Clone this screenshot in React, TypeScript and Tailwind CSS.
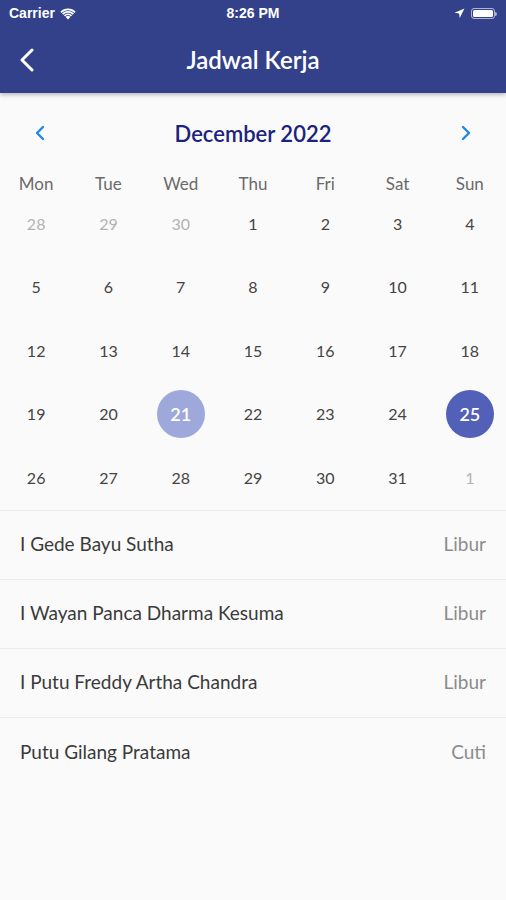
import type { ReactNode } from "react";

const days: { d: number; muted?: boolean; mark?: "light" | "dark" }[][] = [
  [{ d: 28, muted: true }, { d: 29, muted: true }, { d: 30, muted: true }, { d: 1 }, { d: 2 }, { d: 3 }, { d: 4 }],
  [{ d: 5 }, { d: 6 }, { d: 7 }, { d: 8 }, { d: 9 }, { d: 10 }, { d: 11 }],
  [{ d: 12 }, { d: 13 }, { d: 14 }, { d: 15 }, { d: 16 }, { d: 17 }, { d: 18 }],
  [{ d: 19 }, { d: 20 }, { d: 21, mark: "light" }, { d: 22 }, { d: 23 }, { d: 24 }, { d: 25, mark: "dark" }],
  [{ d: 26 }, { d: 27 }, { d: 28 }, { d: 29 }, { d: 30 }, { d: 31 }, { d: 1, muted: true }],
];

const weekdays = ["Mon", "Tue", "Wed", "Thu", "Fri", "Sat", "Sun"];

const staff = [
  { name: "I Gede Bayu Sutha", status: "Libur" },
  { name: "I Wayan Panca Dharma Kesuma", status: "Libur" },
  { name: "I Putu Freddy Artha Chandra", status: "Libur" },
  { name: "Putu Gilang Pratama", status: "Cuti" },
];

function StatusBar() {
  return (
    <div className="flex h-[27px] items-center justify-between px-[9px] text-[14px] font-semibold text-white [font-family:'Liberation_Sans',Arial,sans-serif]">
      <div className="flex w-[100px] items-center gap-[5px]">
        <span>Carrier</span>
        <svg width="16" height="12" viewBox="0 0 16 12" fill="white">
          <path d="M8 11.5 5.6 9a3.4 3.4 0 0 1 4.8 0Z" />
          <path d="M3.9 7.3a5.8 5.8 0 0 1 8.2 0l-1.2 1.2a4.1 4.1 0 0 0-5.8 0Z" />
          <path d="M2.1 5.5a8.4 8.4 0 0 1 11.8 0l-1.2 1.2a6.7 6.7 0 0 0-9.4 0Z" />
          <path d="M.3 3.7a11 11 0 0 1 15.4 0l-1.2 1.2a9.3 9.3 0 0 0-13 0Z" />
        </svg>
      </div>
      <span>8:26 PM</span>
      <div className="flex w-[100px] items-center justify-end gap-[6px]">
        <svg width="11" height="11" viewBox="0 0 11 11" fill="white">
          <path d="M10.5.5 .5 4.8l4.6.6.6 4.6Z" />
        </svg>
        <div className="flex items-center">
          <div className="h-[11px] w-[24px] rounded-[3px] border border-white/60 p-[1px]">
            <div className="h-full w-full rounded-[1.5px] bg-white" />
          </div>
          <div className="h-[4px] w-[1.5px] rounded-r bg-white/60" />
        </div>
      </div>
    </div>
  );
}

function Cell({ children }: { children: ReactNode }) {
  return <div className="flex items-center justify-center">{children}</div>;
}

export default function App() {
  return (
    <div className="min-h-[900px] bg-[#fafafa] [font-family:Lato,'Noto_Sans',sans-serif]">
      <div className="relative z-10 bg-[#33418a] shadow-[0_2px_4px_rgba(0,0,0,0.25)]">
        <StatusBar />
        <div className="relative flex h-[66px] items-center justify-center">
          <svg className="absolute left-[19px] top-[21px]" width="16" height="24" viewBox="0 0 16 24" fill="none">
            <path d="M13 2 3 12l10 10" stroke="white" strokeWidth="3" strokeLinecap="round" strokeLinejoin="round" />
          </svg>
          <h1 className="text-[24px] font-semibold text-white">Jadwal Kerja</h1>
        </div>
      </div>

      <div className="border-b border-[#ececec] pt-[18px]">
        <div className="flex h-[44px] items-center justify-between px-[34px]">
          <svg width="12" height="16" viewBox="0 0 12 16" fill="none">
            <path d="M9 2 3 8l6 6" stroke="#1e88e5" strokeWidth="2.4" strokeLinecap="round" strokeLinejoin="round" />
          </svg>
          <span className="text-[22px] font-semibold text-[#1a237e]">December 2022</span>
          <svg width="12" height="16" viewBox="0 0 12 16" fill="none">
            <path d="M3 2l6 6-6 6" stroke="#1e88e5" strokeWidth="2.4" strokeLinecap="round" strokeLinejoin="round" />
          </svg>
        </div>
        <div className="mt-[16px] grid h-[21px] grid-cols-7 text-[17px] text-[#6a6a6a]">
          {weekdays.map((w) => (
            <Cell key={w}>{w}</Cell>
          ))}
        </div>
        <div className="grid grid-cols-7">
          {days.flat().map((c, i) => (
            <div key={i} className="flex h-[63.5px] items-center justify-center">
              {c.mark ? (
                <div
                  className={
                    c.mark === "light"
                      ? "flex h-[48px] w-[48px] items-center justify-center rounded-full bg-[#9fa8da] text-[18px] font-semibold text-white"
                      : "flex h-[48px] w-[48px] items-center justify-center rounded-full bg-[#5260b8] text-[18px] font-semibold text-white"
                  }
                >
                  {c.d}
                </div>
              ) : (
                <span className={c.muted ? "text-[16px] text-[#b3b3b3]" : "text-[16px] text-[#444]"}>{c.d}</span>
              )}
            </div>
          ))}
        </div>
      </div>

      <div>
        {staff.map((s, i) => (
          <div
            key={s.name}
            className={
              i < staff.length - 1
                ? "flex h-[69px] items-center justify-between border-b border-[#ececec] px-[20px] text-[19px]"
                : "flex h-[69px] items-center justify-between px-[20px] text-[19px]"
            }
          >
            <span className="text-[#3a3a3a]">{s.name}</span>
            <span className="text-[#8c8c8c]">{s.status}</span>
          </div>
        ))}
      </div>
    </div>
  );
}
